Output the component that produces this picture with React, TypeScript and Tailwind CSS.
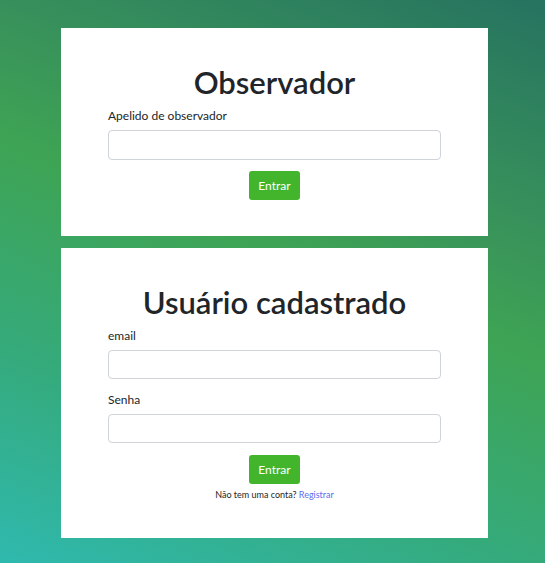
export default function App() {
  return (
    <div
      className="min-h-screen w-full flex flex-col items-center gap-[12px] pt-[28px] pb-[25px] pl-[4px] bg-[linear-gradient(22deg,#2fb9ae_0%,#35aa7a_28%,#3ea454_54%,#37905b_72%,#267360_100%)]"
      style={{ fontFamily: 'Lato, "Open Sans", sans-serif' }}
    >
      {/* Observer login */}
      <div className="w-[427px] bg-white px-[47px] pt-[36px] pb-[36px] text-[#212529]">
        <h1 className="text-center text-[31px] font-semibold leading-[1.2] mb-[6px]">Observador</h1>
        <label className="block text-[12px] leading-[18px] mb-[5px]">Apelido de observador</label>
        <input
          type="text"
          className="block w-full h-[30px] rounded-[4px] border border-[#ced4da] bg-white outline-none"
        />
        <div className="flex justify-center mt-[11px]">
          <button className="h-[29px] px-[9px] rounded-[3px] bg-[#43b52c] text-white text-[12px]">Entrar</button>
        </div>
      </div>

      {/* Registered user login */}
      <div className="w-[427px] bg-white px-[47px] pt-[36px] pb-[36px] text-[#212529]">
        <h1 className="text-center text-[31px] font-semibold leading-[1.2] mb-[6px]">Usuário cadastrado</h1>
        <label className="block text-[12px] leading-[18px] mb-[5px]">email</label>
        <input
          type="email"
          className="block w-full h-[29px] rounded-[4px] border border-[#ced4da] bg-white outline-none"
        />
        <label className="block text-[12px] leading-[18px] mt-[12px] mb-[5px]">Senha</label>
        <input
          type="password"
          className="block w-full h-[29px] rounded-[4px] border border-[#ced4da] bg-white outline-none"
        />
        <div className="flex justify-center mt-[12px]">
          <button className="h-[29px] px-[9px] rounded-[3px] bg-[#43b52c] text-white text-[12px]">Entrar</button>
        </div>
        <p className="text-center text-[9px] leading-[14px] mt-[4px]">
          Não tem uma conta? <a className="text-[#5b6ff0]">Registrar</a>
        </p>
      </div>
    </div>
  );
}
